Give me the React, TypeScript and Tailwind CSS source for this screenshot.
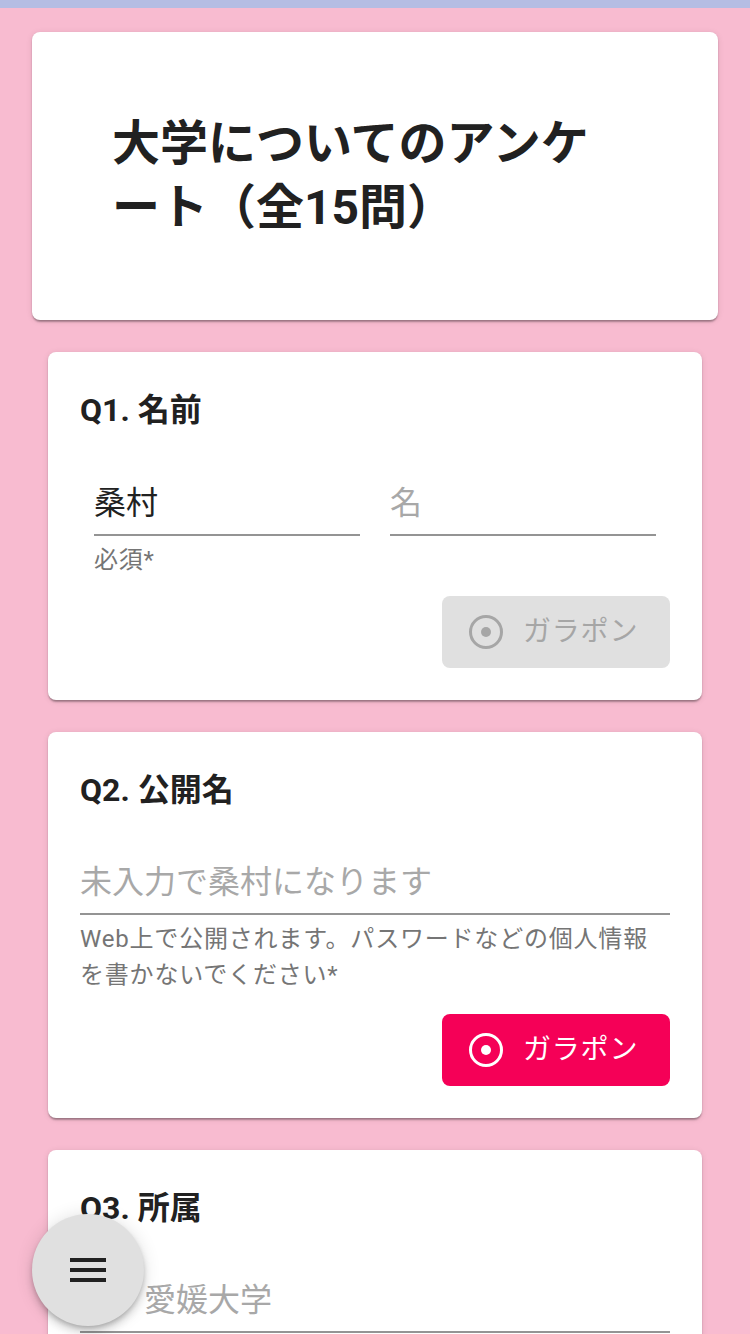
import React from "react";

const FONT = "font-['Roboto','Noto_Sans_CJK_JP',sans-serif]";

function RadioIcon({ color }: { color: string }) {
  return (
    <svg width="36" height="36" viewBox="0 0 36 36" fill="none">
      <circle cx="18" cy="18" r="15.5" stroke={color} strokeWidth="3" />
      <circle cx="18" cy="18" r="5" fill={color} />
    </svg>
  );
}

function GaraponButton({ disabled }: { disabled?: boolean }) {
  const color = disabled ? "#a6a6a6" : "#ffffff";
  return (
    <div
      className={`flex h-[72px] w-[228px] items-center rounded-[8px] pl-[26px] ${
        disabled ? "bg-[#e0e0e0] text-[#a6a6a6]" : "bg-[#f50057] text-white"
      }`}
    >
      <RadioIcon color={color} />
      <span className="ml-[19px] text-[28px] leading-[40px] tracking-[0.8px]">ガラポン</span>
    </div>
  );
}

function Field({ value, placeholder }: { value?: string; placeholder?: string }) {
  return (
    <div className="h-[59px] border-b-2 border-[#949494]">
      <div
        className={`text-[32px] leading-[52px] ${
          value ? "text-[#212121]" : "text-[#a8a8a8]"
        }`}
      >
        {value ?? placeholder}
      </div>
    </div>
  );
}

const cardCls =
  "rounded-[8px] bg-white shadow-[0_3px_2px_-1px_rgba(0,0,0,0.25),0_1px_2px_0_rgba(0,0,0,0.14),0_1px_6px_0_rgba(0,0,0,0.1)]";

export default function App() {
  return (
    <div className={`relative h-[1334px] overflow-hidden bg-[#f8bbd0] ${FONT}`}>
      <div className="h-2 bg-[#b5bde3]" />
      <div className="px-8 pt-6">
        <div className={`${cardCls} p-20`}>
          <h1 className="max-w-[500px] text-[48px] font-bold leading-[64px] text-[#212121]">
            大学についてのアンケート（全15問）
          </h1>
        </div>
      </div>

      <div className="flex flex-col gap-8 px-12 pt-8">
        {/* Q1 */}
        <div className={`${cardCls} p-8`}>
          <div className="text-[32px] font-bold leading-[52px] text-[#212121]">Q1. 名前</div>
          <div className="mt-[41px] flex gap-[30px] px-[14px]">
            <div className="flex-1">
              <Field value="桑村" />
              <div className="mt-[6px] text-[24px] leading-[36px] tracking-[0.8px] text-[#757575]">
                必須*
              </div>
            </div>
            <div className="flex-1">
              <Field placeholder="名" />
            </div>
          </div>
          <div className="mt-[18px] flex justify-end">
            <GaraponButton disabled />
          </div>
        </div>

        {/* Q2 */}
        <div className={`${cardCls} p-8`}>
          <div className="text-[32px] font-bold leading-[52px] text-[#212121]">Q2. 公開名</div>
          <div className="mt-10">
            <Field placeholder="未入力で桑村になります" />
            <div className="mt-[6px] text-[24px] leading-[36px] tracking-[0.8px] text-[#757575]">
              Web上で公開されます。パスワードなどの個人情報を書かないでください*
            </div>
          </div>
          <div className="mt-[21px] flex justify-end">
            <GaraponButton />
          </div>
        </div>

        {/* Q3 */}
        <div className={`${cardCls} p-8`}>
          <div className="text-[32px] font-bold leading-[52px] text-[#212121]">Q3. 所属</div>
          <div className="mt-10">
            <Field placeholder="例）愛媛大学" />
          </div>
          <div className="h-[200px]" />
        </div>
      </div>

      <div className="fixed bottom-2 left-8 flex h-[112px] w-[112px] items-center justify-center rounded-full bg-[#e0e0e0] shadow-[0_3px_5px_-1px_rgba(0,0,0,0.2),0_6px_10px_0_rgba(0,0,0,0.14),0_1px_18px_0_rgba(0,0,0,0.12)]">
        <svg width="48" height="48" viewBox="0 0 24 24" fill="#212121">
          <path d="M3 18h18v-2H3v2zm0-5h18v-2H3v2zm0-7v2h18V6H3z" />
        </svg>
      </div>
    </div>
  );
}
